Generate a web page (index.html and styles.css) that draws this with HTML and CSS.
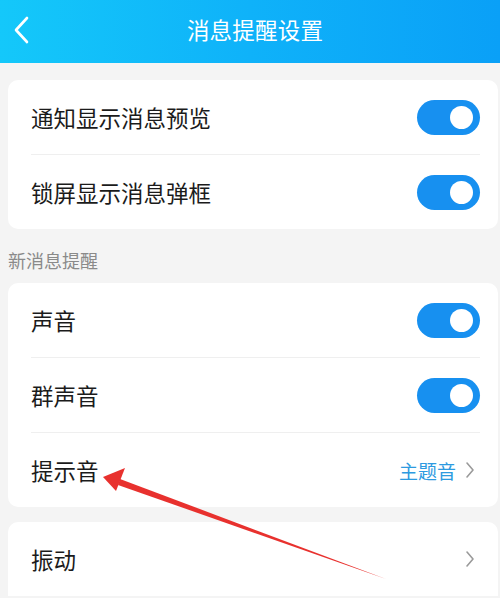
FILE: index.html
```html
<!DOCTYPE html>
<html lang="zh">
<head>
<meta charset="utf-8">
<link rel="stylesheet" href="styles.css">
</head>
<body>
<div class="page">
  <header class="topbar">
    <svg class="back" width="20" height="30" viewBox="0 0 20 30"><path d="M15 3 L4 15 L15 27" fill="none" stroke="#fff" stroke-width="2.6" stroke-linecap="round" stroke-linejoin="round"/></svg>
    <div class="title">消息提醒设置</div>
  </header>

  <section class="card card-first">
    <div class="row"><span class="label">通知显示消息预览</span><span class="toggle"><span class="knob"></span></span></div>
    <div class="row"><span class="label">锁屏显示消息弹框</span><span class="toggle"><span class="knob"></span></span></div>
  </section>

  <div class="section-title">新消息提醒</div>

  <section class="card">
    <div class="row"><span class="label">声音</span><span class="toggle"><span class="knob"></span></span></div>
    <div class="row"><span class="label">群声音</span><span class="toggle"><span class="knob"></span></span></div>
    <div class="row"><span class="label">提示音</span><span class="value">主题音<svg class="chev" width="10" height="18" viewBox="0 0 10 18"><path d="M2 2 L8 9 L2 16" fill="none" stroke="#9a9a9a" stroke-width="1.6" stroke-linecap="round" stroke-linejoin="round"/></svg></span></div>
  </section>

  <section class="card card-last">
    <div class="row"><span class="label">振动</span><span class="value"><svg class="chev" width="10" height="18" viewBox="0 0 10 18"><path d="M2 2 L8 9 L2 16" fill="none" stroke="#9a9a9a" stroke-width="1.6" stroke-linecap="round" stroke-linejoin="round"/></svg></span></div>
  </section>

  <svg class="arrow" width="500" height="598" viewBox="0 0 500 598">
    <polygon points="120,479 386,579 118,485" fill="#e8312e"/>
    <polygon points="103,477 125,468 116,491" fill="#e8312e"/>
  </svg>
</div>
</body>
</html>
```

FILE: styles.css
```css
html, body {
  margin: 0;
  padding: 0;
}
body {
  background: #f4f4f4;
  font-family: "Noto Sans CJK SC", "Noto Sans", sans-serif;
  width: 500px;
  height: 598px;
  overflow: hidden;
}
.page {
  position: relative;
  width: 500px;
  height: 598px;
  overflow: hidden;
}
.topbar {
  height: 63px;
  background: linear-gradient(90deg, #14c8fa 0%, #0fb2f9 50%, #0aa0f7 100%);
  display: flex;
  align-items: center;
  justify-content: center;
  position: relative;
}
.back {
  position: absolute;
  left: 12px;
  top: 15px;
}
.title {
  color: #fff;
  font-size: 22.5px;
  letter-spacing: 0.2px;
  margin-left: 10px;
  margin-top: -5px;
}
.card {
  background: #fff;
  margin: 0 2px 0 8px;
  border-radius: 10px;
  padding: 0 18px 0 23px;
}
.card-first {
  margin-top: 17px;
}
.card-last {
  margin-top: 15px;
  border-radius: 10px 10px 0 0;
}
.row {
  height: 74px;
  display: flex;
  align-items: center;
  justify-content: space-between;
  border-top: 1px solid #efefef;
}
.row:first-child {
  border-top: none;
}
.label {
  font-size: 22.5px;
  color: #1b1b1b;
}
.toggle {
  width: 63px;
  height: 35px;
  border-radius: 18px;
  background: #1790f0;
  position: relative;
  display: block;
}
.knob {
  position: absolute;
  right: 7px;
  top: 6px;
  width: 23px;
  height: 23px;
  border-radius: 50%;
  background: #fff;
}
.value {
  display: flex;
  align-items: center;
  font-size: 19px;
  color: #2d9ae0;
  gap: 9px;
  margin-right: 5px;
}
.section-title {
  font-size: 18px;
  color: #8a8a8a;
  padding: 19px 8px 10px;
  line-height: 25px;
}
.arrow {
  position: absolute;
  left: 0;
  top: 0;
  pointer-events: none;
}
```
